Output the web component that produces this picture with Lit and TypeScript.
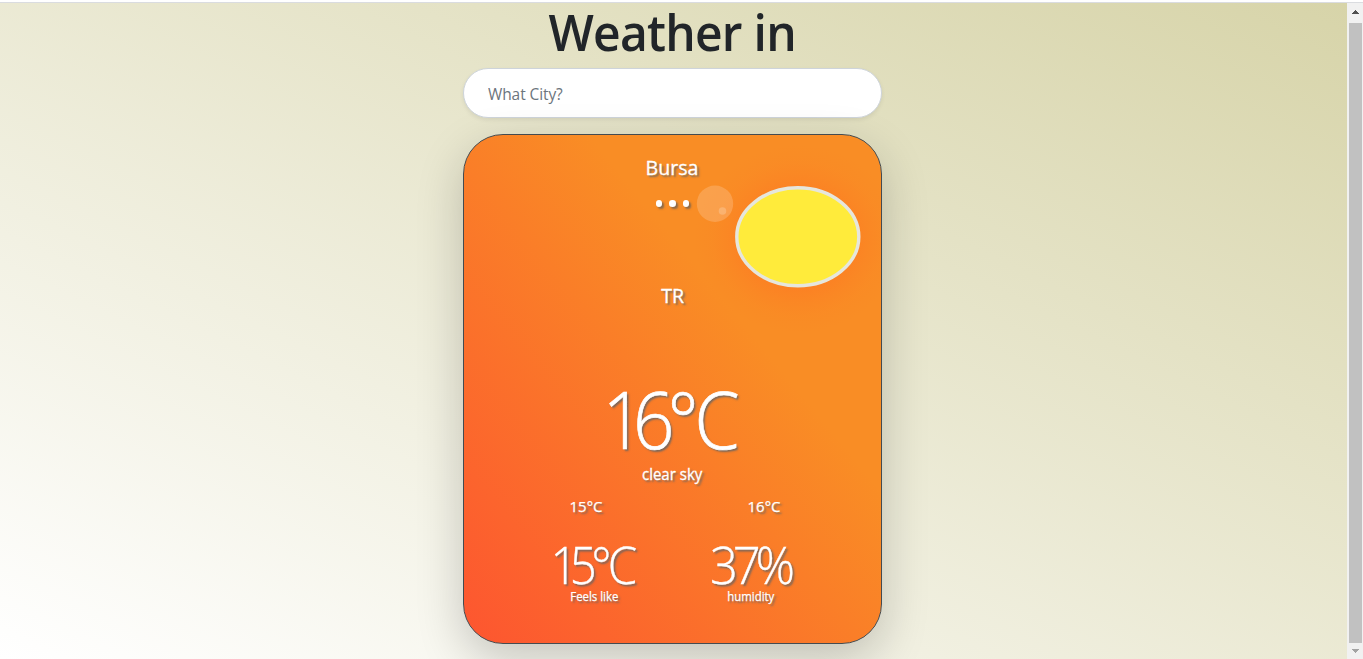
import { LitElement, html, css } from "lit";
import { customElement } from "lit/decorators.js";

@customElement("app-root")
export class AppRoot extends LitElement {
  static styles = css`
    :host {
      display: flex;
      box-sizing: border-box;
      height: 659px;
      width: 100%;
      overflow: hidden;
      border-top: 2px solid #fff;
      font-family: "Open Sans", "Noto Sans", sans-serif;
    }
    * { box-sizing: border-box; }
    .page {
      flex: 1;
      min-width: 0;
      border-top: 1px solid #dadce0;
      padding-right: 2px;
      display: flex;
      flex-direction: column;
      align-items: center;
      background: linear-gradient(to top right, #fff, #d7d4a9);
    }
    .fit { display: inline-block; white-space: nowrap; transform: scaleX(0.95); }
    h1 {
      margin: 0;
      height: 65px;
      font-size: 50.5px;
      line-height: 57px;
      font-weight: 600;
      color: #212529;
    }
    h1 .fit { letter-spacing: -0.8px; }
    .search {
      flex: none;
      width: 419px;
      height: 50px;
      padding: 2px 24px 0;
      border: 1px solid #ced4da;
      border-radius: 25px;
      background: #fff;
      box-shadow: 0 2px 4px rgba(0, 0, 0, 0.075);
      font: 400 15.5px "Open Sans", "Noto Sans", sans-serif;
      letter-spacing: -0.1px;
      outline: none;
    }
    .search::placeholder { color: #6c757d; opacity: 1; }
    .card {
      position: relative;
      flex: none;
      width: 419px;
      height: 510px;
      margin-top: 16px;
      border: 1px solid #444b50;
      border-radius: 40px;
      background: linear-gradient(to top right, #fd5530, #f98d25 65%, #f98d25);
      box-shadow: 0 16px 48px rgba(0, 0, 0, 0.2);
      color: #fff;
      text-align: center;
      text-shadow: 2px 2px 2px rgba(100, 100, 100, 0.85);
      display: flex;
      flex-direction: column;
      align-items: center;
    }
    .place {
      height: 231px;
      padding-top: 18px;
      font-size: 20px;
      line-height: 30px;
      font-weight: 500;
      -webkit-text-stroke: 0.3px #fff;
    }
    .place .fit { transform: scaleX(0.98); }
    .dots { display: flex; justify-content: center; gap: 7px; height: 98px; padding-top: 17px; }
    .dots i {
      width: 6.6px;
      height: 6.6px;
      border-radius: 50%;
      background: #fff;
      box-shadow: 2px 2px 2px rgba(90, 90, 90, 0.7);
    }
    .art { position: absolute; left: 0; top: 0; width: 417px; height: 508px; overflow: hidden; }
    .place, .temp, .sky, .range, .stats { position: relative; }
    .temp {
      height: 95px;
      font-size: 79px;
      line-height: 105px;
      font-weight: 300;
      letter-spacing: -12px;
      -webkit-text-stroke: 0.7px #fff;
    }
    .temp .fit { margin-right: 13px; transform: scaleX(0.92); }
    .temp .six { letter-spacing: -7.5px; }
    .temp .deg { letter-spacing: -4.5px; }
    .sky {
      height: 33px;
      font-size: 15.5px;
      line-height: 26px;
      font-weight: 500;
      -webkit-text-stroke: 0.3px #fff;
    }
    .sky .fit { transform: scaleX(0.97); }
    .range {
      display: grid;
      grid-template-columns: 178px 178px;
      height: 36px;
      margin-left: 5px;
      font-size: 15px;
      line-height: 24px;
      font-weight: 500;
      -webkit-text-stroke: 0.25px #fff;
    }
    .stats { display: grid; grid-template-columns: 156px 156px; }
    .value {
      height: 58px;
      font-size: 51.5px;
      line-height: 69px;
      font-weight: 300;
      letter-spacing: -8.5px;
      -webkit-text-stroke: 0.35px #fff;
    }
    .value .fit { margin-right: 9px; transform: scaleX(0.92); }
    .value .six { letter-spacing: -6px; }
    .value .deg { letter-spacing: -4px; }
    .value.percent { letter-spacing: -5.5px; }
    .value.percent .fit { margin-right: 1px; transform: scaleX(0.95); }
    .label {
      font-size: 12px;
      line-height: 18px;
      font-weight: 500;
      -webkit-text-stroke: 0.25px #fff;
    }
    .bar {
      flex: none;
      width: 16px;
      border-top: 1px solid #dadce0;
      display: flex;
      flex-direction: column;
      align-items: center;
      background: #f1f1f1;
    }
    .bar svg { flex: none; width: 16px; height: 20px; }
    .bar svg.end { height: 16px; }
    .thumb { flex: 1; width: 13px; margin-left: 1px; background: #c1c1c1; }
  `;

  render() {
    return html`
      <main class="page">
        <h1><span class="fit">Weather in</span></h1>
        <input class="search" type="text" placeholder="What City?" />
        <section class="card">
          <svg class="art" viewBox="0 0 417 508">
            <defs>
              <radialGradient id="glow">
                <stop offset="0.5" stop-color="#fd7a22" stop-opacity="0.65" />
                <stop offset="0.68" stop-color="#fd7a22" stop-opacity="0.3" />
                <stop offset="0.82" stop-color="#fd7a22" stop-opacity="0.1" />
                <stop offset="1" stop-color="#fd7a22" stop-opacity="0" />
              </radialGradient>
            </defs>
            <ellipse cx="334" cy="104" rx="104" ry="94" fill="url(#glow)" />
            <circle cx="251" cy="68.7" r="18.2" fill="#fff" fill-opacity="0.18" />
            <circle cx="258.5" cy="76" r="3.8" fill="#fff" fill-opacity="0.2" />
            <ellipse cx="333.8" cy="101.7" rx="61" ry="49" fill="#ffeb3b" stroke="#e6e6dc" stroke-width="3.4" />
          </svg>
          <div class="place">
            <div><span class="fit">Bursa</span></div>
            <div class="dots"><i></i><i></i><i></i></div>
            <div><span class="fit">TR</span></div>
          </div>
          <div class="temp"><span class="fit">1<span class="six">6</span><span class="deg">°</span>C</span></div>
          <div class="sky"><span class="fit">clear sky</span></div>
          <div class="range"><span>15°C</span><span>16°C</span></div>
          <div class="stats">
            <div><div class="value"><span class="fit">1<span class="six">5</span><span class="deg">°</span>C</span></div><div class="label"><span class="fit">Feels like</span></div></div>
            <div><div class="value percent"><span class="fit">37%</span></div><div class="label"><span class="fit">humidity</span></div></div>
          </div>
        </section>
      </main>
      <aside class="bar">
        <svg viewBox="0 0 16 20" shape-rendering="crispEdges"><path d="M5 11h7v-1h-1V9h-1V8H9V7H8v1H7v1H6v1H5z" fill="#505050" /></svg>
        <div class="thumb"></div>
        <svg class="end" viewBox="0 0 16 16" shape-rendering="crispEdges"><path d="M5 6h7v1h-1v1h-1v1H9v1H8V9H7V8H6V7H5z" fill="#a3a3a3" /></svg>
      </aside>
    `;
  }
}
